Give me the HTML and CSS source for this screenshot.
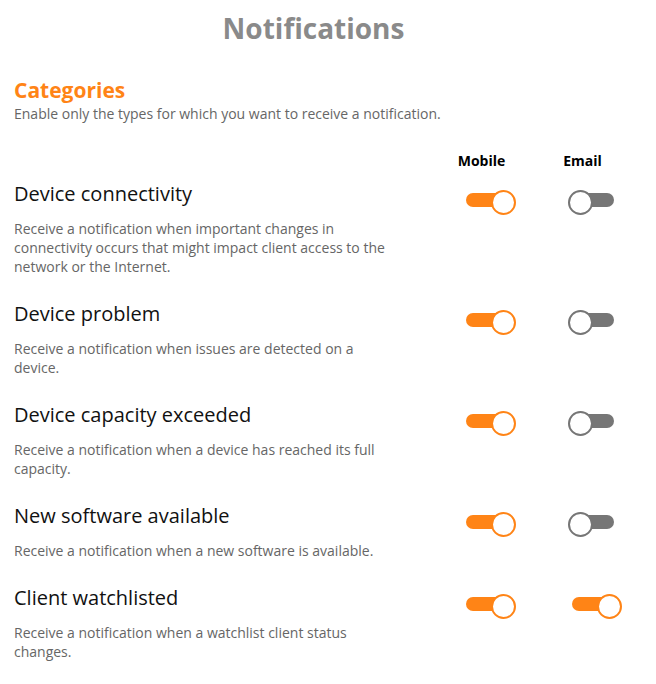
FILE: index.html
```html
<!DOCTYPE html>
<html>
<head>
    <meta charset="utf-8" />
    <title>Notifications</title>
    <link rel="stylesheet" href="styles.css">
</head>
<body>
    <div class="page">
      <h1 class="page_title">Notifications</h1>
      <h2 class="section_title">Categories</h2>
      <p class="section_sub">Enable only the types for which you want to receive a notification.</p>

      <!-- 表头 -->
      <div class="head_row">
        <div class="info"></div>
        <div class="cell">Mobile</div>
        <div class="cell">Email</div>
      </div>

      <div class="item">
        <div class="info">
          <div class="item_title">Device connectivity</div>
          <p class="item_desc">Receive a notification when important changes in connectivity occurs that might impact client access to the network or the Internet.</p>
        </div>
        <div class="cell cell_mobile">
          <label class="switch"><input type="checkbox" checked><span class="slider"></span></label>
        </div>
        <div class="cell cell_email">
          <label class="switch"><input type="checkbox"><span class="slider"></span></label>
        </div>
      </div>

      <div class="item">
        <div class="info">
          <div class="item_title">Device problem</div>
          <p class="item_desc">Receive a notification when issues are detected on a device.</p>
        </div>
        <div class="cell cell_mobile">
          <label class="switch"><input type="checkbox" checked><span class="slider"></span></label>
        </div>
        <div class="cell cell_email">
          <label class="switch"><input type="checkbox"><span class="slider"></span></label>
        </div>
      </div>

      <div class="item">
        <div class="info">
          <div class="item_title">Device capacity exceeded</div>
          <p class="item_desc">Receive a notification when a device has reached its full capacity.</p>
        </div>
        <div class="cell cell_mobile">
          <label class="switch"><input type="checkbox" checked><span class="slider"></span></label>
        </div>
        <div class="cell cell_email">
          <label class="switch"><input type="checkbox"><span class="slider"></span></label>
        </div>
      </div>

      <div class="item">
        <div class="info">
          <div class="item_title">New software available</div>
          <p class="item_desc">Receive a notification when a new software is available.</p>
        </div>
        <div class="cell cell_mobile">
          <label class="switch"><input type="checkbox" checked><span class="slider"></span></label>
        </div>
        <div class="cell cell_email">
          <label class="switch"><input type="checkbox"><span class="slider"></span></label>
        </div>
      </div>

      <div class="item">
        <div class="info">
          <div class="item_title">Client watchlisted</div>
          <p class="item_desc">Receive a notification when a watchlist client status changes.</p>
        </div>
        <div class="cell cell_mobile">
          <label class="switch"><input type="checkbox" checked><span class="slider"></span></label>
        </div>
        <div class="cell cell_email">
          <label class="switch"><input type="checkbox" checked><span class="slider"></span></label>
        </div>
      </div>
    </div>
</body>
</html>
```

FILE: styles.css
```css
* {
  margin: 0;
  padding: 0;
  box-sizing: border-box;
}
body {
  font-family: "Open Sans", "Liberation Sans", sans-serif;
  background-color: #fff;
  color: #111;
}
.page {
  padding: 10px 23px 0 14px;
}
/* 大标题 */
.page_title {
  font-size: 28px;
  line-height: 36px;
  font-weight: 700;
  color: #8a8a8a;
  text-align: center;
  padding-right: 20px;
}
.section_title {
  margin-top: 30px;
  font-size: 21px;
  line-height: 28px;
  font-weight: 700;
  color: #ff8416;
}
.section_sub {
  font-size: 14px;
  line-height: 19px;
  color: #666;
}
/* 表头 Mobile / Email */
.head_row {
  display: flex;
  margin-top: 28px;
  font-size: 14px;
  line-height: 20px;
  font-weight: 700;
  color: #000;
}
.info {
  flex: 1;
}
.cell {
  width: 101px;
  text-align: center;
}
.head_row + .item {
  margin-top: 9px;
}
/* 每一行 */
.item {
  display: flex;
  margin-bottom: 24px;
}
.item_title {
  font-size: 20px;
  line-height: 28px;
}
.item_desc {
  margin-top: 11px;
  max-width: 380px;
  font-size: 14px;
  line-height: 19px;
  color: #666;
}
.item .cell {
  text-align: left;
  padding-top: 13px;
}
.cell_mobile {
  padding-left: 35px;
}
.cell_email {
  padding-left: 40px;
}
/* 开关 */
.switch {
  position: relative;
  display: block;
  width: 42px;
  height: 14px;
  cursor: pointer;
}
.switch input {
  display: none;
}
.slider {
  position: absolute;
  top: 0;
  left: 0;
  right: 0;
  bottom: 0;
  border-radius: 7px;
  background-color: #767676;
}
.slider::before {
  content: "";
  position: absolute;
  top: -3.5px;
  left: -4px;
  width: 21px;
  height: 21px;
  border-radius: 50%;
  border: 2px solid #767676;
  background-color: #fff;
}
.switch input:checked + .slider {
  background-color: #ff8416;
}
.switch input:checked + .slider::before {
  left: 25px;
  border-color: #ff8416;
}
```
